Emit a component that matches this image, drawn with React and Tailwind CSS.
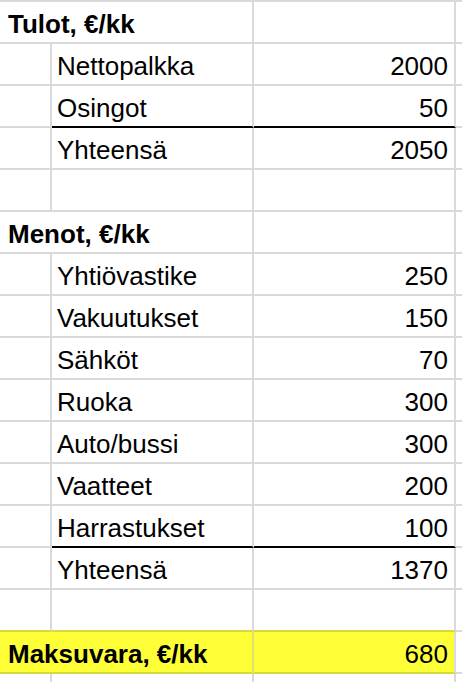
import React from "react";

const rows = [
  { type: "header", label: "Tulot, €/kk" },
  { label: "Nettopalkka", value: "2000" },
  { label: "Osingot", value: "50", underline: true },
  { label: "Yhteensä", value: "2050" },
  { type: "blank", beforeYellow: false },
  { type: "header", label: "Menot, €/kk" },
  { label: "Yhtiövastike", value: "250" },
  { label: "Vakuutukset", value: "150" },
  { label: "Sähköt", value: "70" },
  { label: "Ruoka", value: "300" },
  { label: "Auto/bussi", value: "300" },
  { label: "Vaatteet", value: "200" },
  { label: "Harrastukset", value: "100", underline: true },
  { label: "Yhteensä", value: "1370" },
  { type: "blank", beforeYellow: true },
  { type: "total", label: "Maksuvara, €/kk", value: "680" },
  { type: "blank", last: true },
];

function Row({ row }) {
  // grid line colours
  const gray = "border-[#dadada]";

  if (row.type === "header") {
    return (
      <div className="flex h-[42px]">
        <div className={`w-[254px] flex items-center pt-[3px] pl-[8px] font-bold border-b-2 border-r-2 ${gray}`}>
          {row.label}
        </div>
        <div className={`w-[202px] border-b-2 border-r-2 ${gray}`} />
        <div className={`flex-1 border-b-2 ${gray}`} />
      </div>
    );
  }

  if (row.type === "total") {
    return (
      <div className="flex h-[42px]">
        <div className="w-[254px] flex items-center pt-[3px] pl-[8px] font-bold bg-[#ffff38] border-b-2 border-r-2 border-b-[#d8d840] border-r-[#e0e070]">
          {row.label}
        </div>
        <div className="w-[202px] flex items-center justify-end pt-[3px] pr-[6px] bg-[#ffff38] border-b-2 border-r-2 border-b-[#d8d840] border-r-[#dadada]">
          {row.value}
        </div>
        <div className={`flex-1 border-b-2 ${gray}`} />
      </div>
    );
  }

  if (row.type === "blank") {
    const bottom = row.beforeYellow ? "border-b-[#d8d840]" : "";
    const b = row.last ? "" : "border-b-2";
    return (
      <div className="flex h-[42px]">
        <div className={`w-[52px] ${b} border-r-2 ${gray} ${bottom}`} />
        <div className={`w-[202px] ${b} border-r-2 ${gray} ${bottom}`} />
        <div className={`w-[202px] ${b} border-r-2 ${gray} ${bottom}`} />
        <div className={`flex-1 ${b} ${gray}`} />
      </div>
    );
  }

  const under = row.underline ? "border-b-black" : "";
  return (
    <div className="flex h-[42px]">
      <div className={`w-[52px] border-b-2 border-r-2 ${gray}`} />
      <div className={`w-[202px] flex items-center pt-[3px] pl-[5px] border-b-2 border-r-2 ${gray} ${under}`}>
        {row.label}
      </div>
      <div className={`w-[202px] flex items-center justify-end pt-[3px] pr-[6px] border-b-2 border-r-2 ${gray} ${under}`}>
        {row.value}
      </div>
      <div className={`flex-1 border-b-2 ${gray}`} />
    </div>
  );
}

export default function App() {
  return (
    <div className="w-[462px] h-[682px] overflow-hidden bg-white text-black font-['Liberation_Sans',Arial,sans-serif] text-[26px] leading-[30px]">
      <div className="border-t-2 border-[#dadada]">
        {rows.map((row, i) => (
          <Row key={i} row={row} />
        ))}
      </div>
    </div>
  );
}
